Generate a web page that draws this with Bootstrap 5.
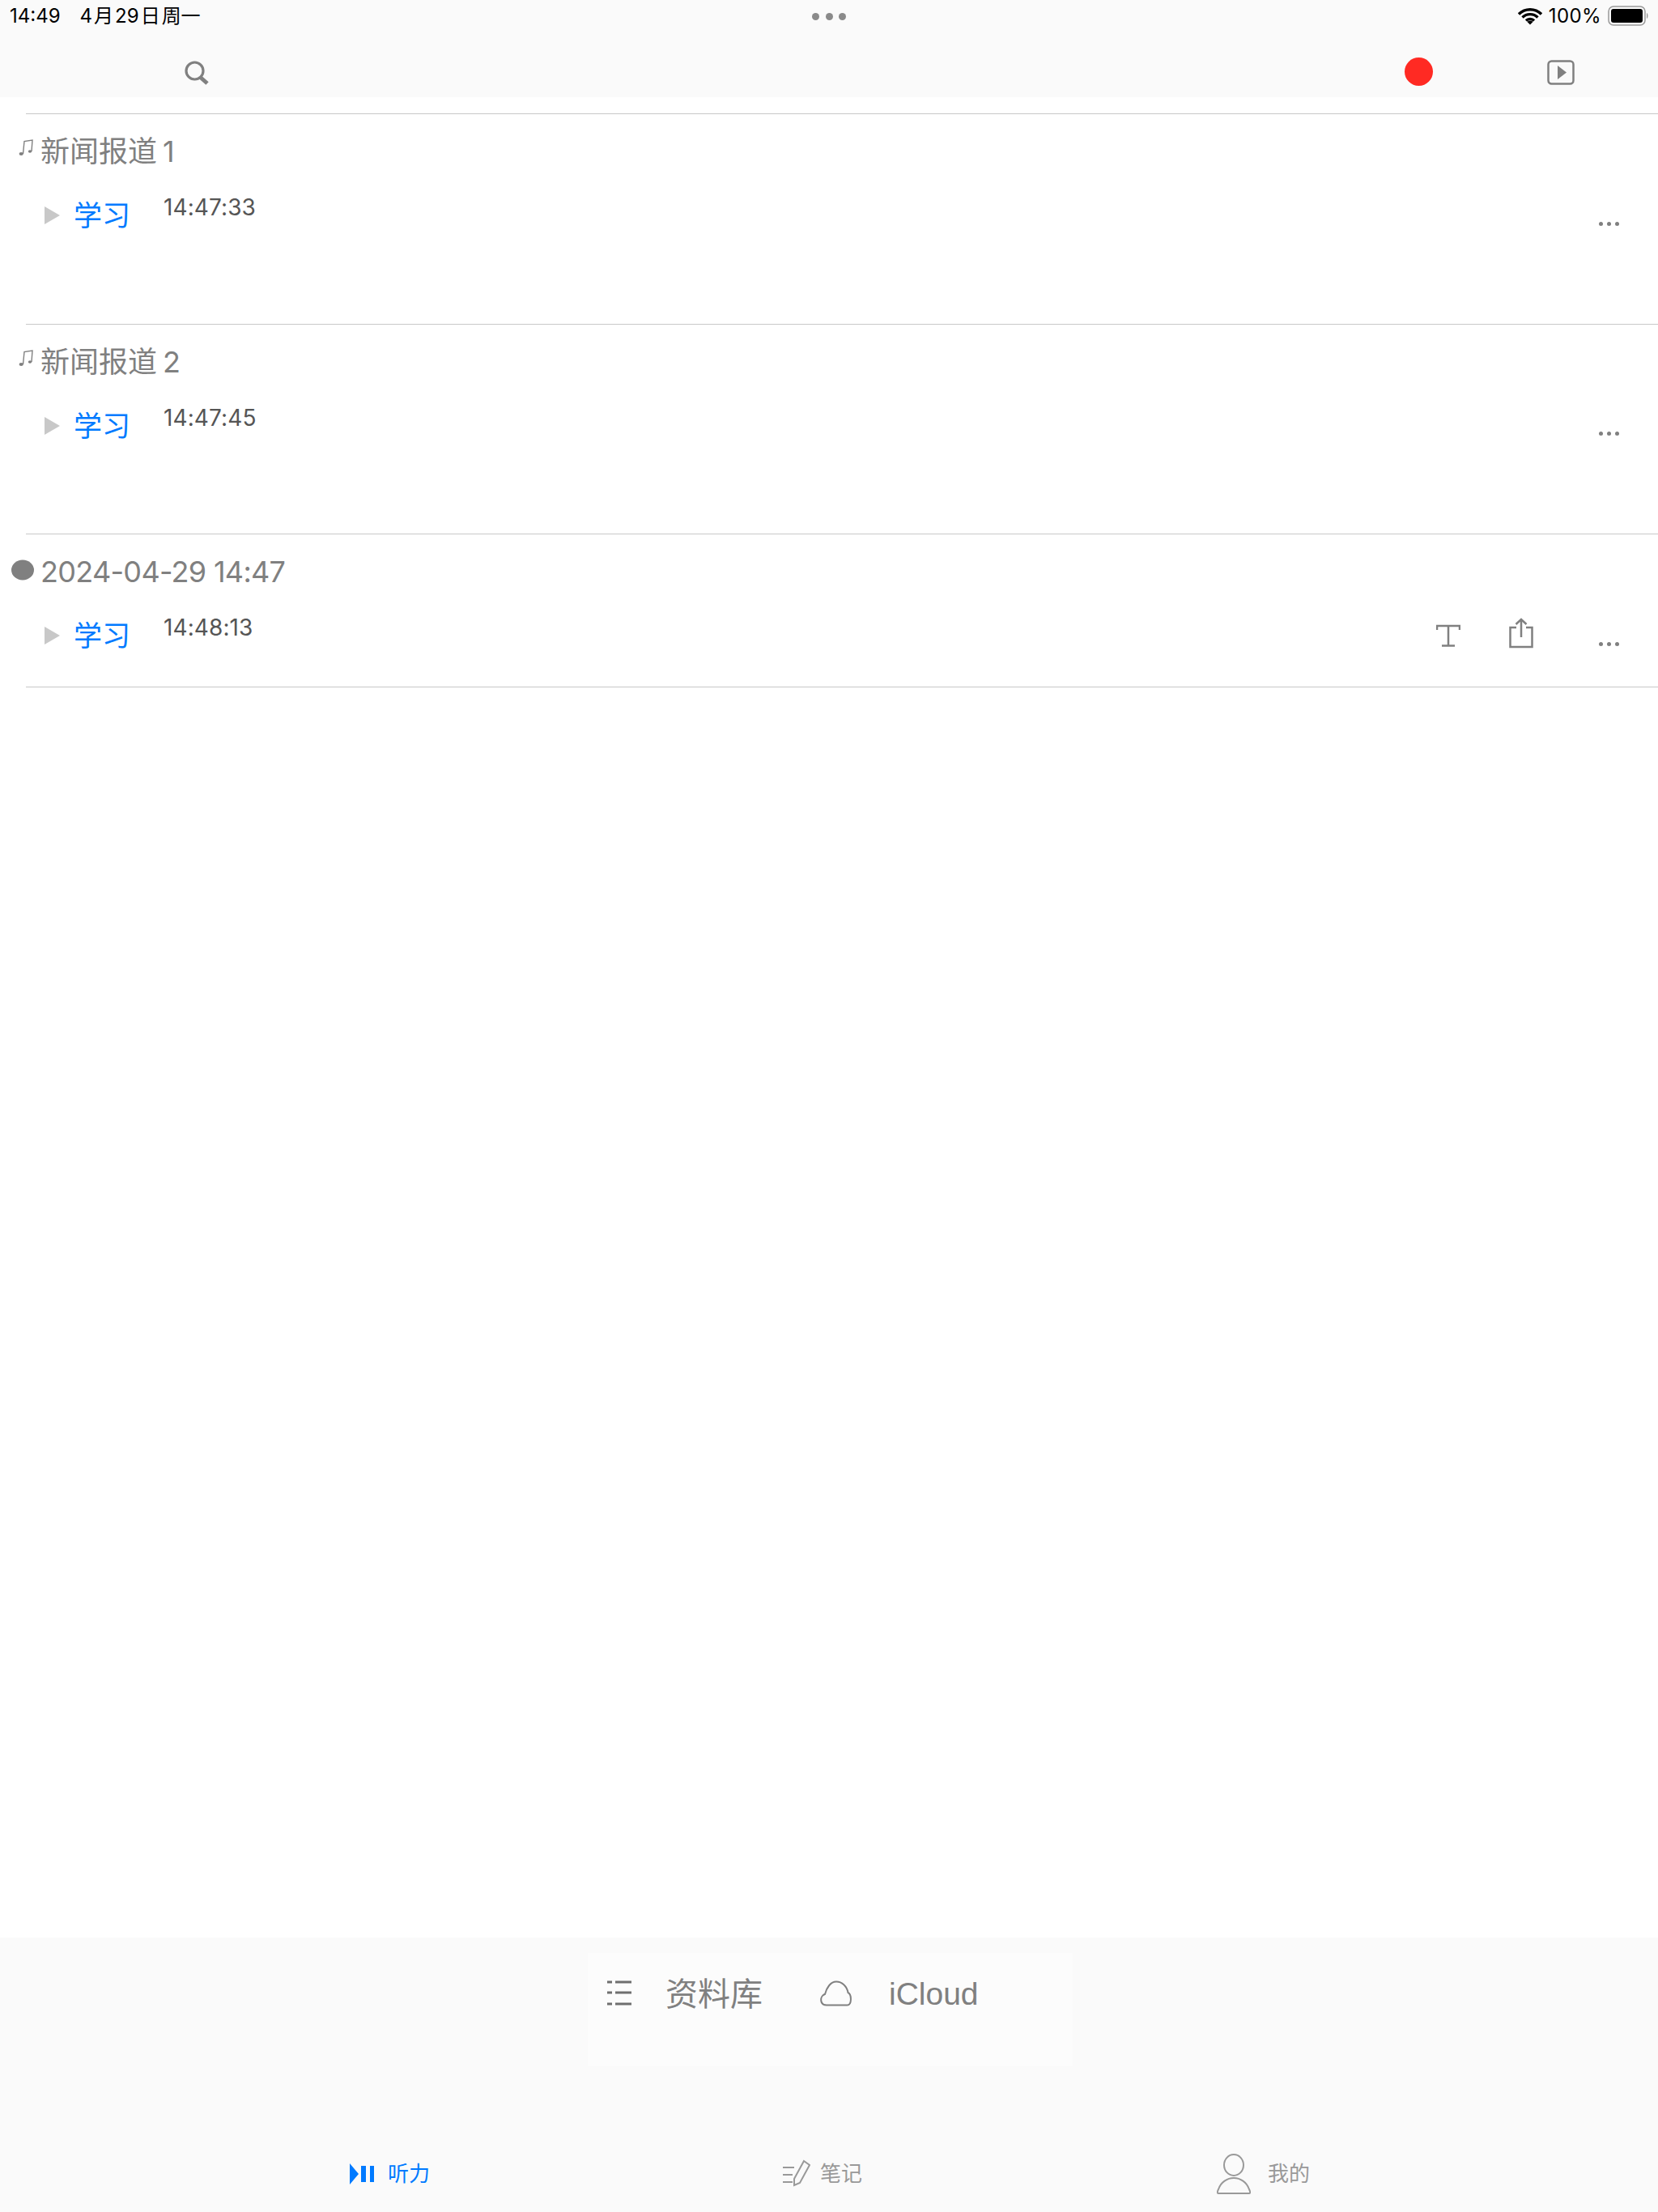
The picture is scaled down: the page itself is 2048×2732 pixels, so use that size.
<!doctype html>
<html lang="zh">
<head>
<meta charset="utf-8">
<link rel="stylesheet" href="https://cdn.jsdelivr.net/npm/bootstrap@5.3.0/dist/css/bootstrap.min.css">
<style>
body{background:#fff;font-family:"Inter","Noto Sans CJK SC",sans-serif;}
.app-page{height:2732px;}
.app-head{height:120px;background:#fafafa;}
.stat-row{height:40px;font-size:24px;line-height:40px;color:#000;padding:0 12px 0 12px;}
.stat-side{flex:1 1 0;}
.stat-date{margin-left:24px;}
.sp-n{margin:0 2px;}
.top-dots{width:42px;}
.top-dots i{width:9px;height:9px;border-radius:50%;background:#8a8a8a;display:block;}
.tool-row{height:80px;}
.ic-search{margin-left:228px;margin-top:20px;}
.rec-dot{width:35px;height:35px;border-radius:50%;background:#ff2a23;margin-left:1477px;margin-top:16px;}
.ic-play{margin-left:141px;margin-top:20px;}
.pct{letter-spacing:.4px;}
.list-area{padding-top:20px;flex:1 1 auto;}
.entry{border-top:1px solid #c8c8c8;margin-left:32px;height:259.5px;}
.entry-short{height:190px;border-bottom:1px solid #c8c8c8;}
.title-row{height:60px;margin-top:16px;margin-left:-32px;color:#808080;font-size:36px;line-height:60px;}
.title-ic{width:50px;flex:none;padding-left:23px;}
.title-ic-dot{padding-left:14px;}
.note-ic{display:block;margin-bottom:10px;}
.title-num{margin-left:7px;}
.title-date{letter-spacing:-.7px;}
.clip-row{height:68px;margin-top:15px;margin-left:23px;padding-right:48px;}
.tri{width:0;height:0;border-left:19px solid #c8c8c8;border-top:11px solid transparent;border-bottom:11px solid transparent;}
.clip-name{color:#007aff;font-size:35px;line-height:68px;margin-left:17px;width:111px;flex:none;}
.clip-time{color:#555;font-size:28px;line-height:36px;margin-bottom:20px;letter-spacing:.1px;}
.more-dots{gap:5px;margin-top:20px;margin-left:auto;}
.more-dots i{width:5px;height:5px;border-radius:50%;background:#808080;display:block;}
.acts{margin-left:auto;}
.ic-share{margin-left:60px;margin-top:-6px;}
.more-dots.after-acts{margin-left:81px;}
.lib-bar{background:#fafafa;height:339px;padding-top:19px;}
.lib-panel{width:599px;height:140px;background:#fcfcfc;margin-left:726px;padding:34px 0 0 24px;color:#808080;font-size:40px;line-height:34px;}
.lib-name{margin-left:42px;}
.ic-cloud{margin-left:71px;}
.cloud-name{margin-left:45px;font-family:"Liberation Sans",sans-serif;font-size:39px;}
.tab-row{padding:108px 0 0 432px;font-size:26px;line-height:50px;color:#999;}
.tab-on{color:#007aff;}
.tab-a{margin-left:17px;}
.tab-b{margin-left:436px;}
.tab-c{margin-left:438px;}
.tab-d{margin-left:21px;}
.tab-e{margin-left:12px;}
</style>
</head>
<body>
<div class="app-page d-flex flex-column">
  <header class="app-head">
    <div class="stat-row d-flex align-items-center">
      <div class="stat-side d-flex">
        <span>14:49</span><span class="stat-date">4<span class="sp-n">月</span>29<span class="sp-n">日</span>周一</span>
      </div>
      <div class="top-dots d-flex justify-content-between"><i></i><i></i><i></i></div>
      <div class="stat-side d-flex align-items-center justify-content-end">
        <svg width="30" height="22" viewBox="0 0 30 22" class="me-2"><path d="M1 8.500a20 20 0 0 1 28 0M5.500 12.500a13.500 13.500 0 0 1 19 0M10 16.500a7 7 0 0 1 10 0" fill="none" stroke="#000" stroke-width="3.400"/><path d="M15 21.500l-3.500-3.500a5 5 0 0 1 7 0z"/></svg>
        <span class="pct">100%</span>
        <svg width="50" height="26" viewBox="0 0 50 26" class="ms-2"><rect x="1" y="1" width="45" height="23" rx="6" fill="none" stroke="#999" stroke-width="1.500"/><rect x="4" y="4" width="39" height="17" rx="3"/><path d="M48 9c2 .5 2 6.500 0 7z" fill="#999"/></svg>
      </div>
    </div>
    <div class="tool-row d-flex align-items-center">
      <svg class="ic-search" width="30" height="30" viewBox="0 0 30 30"><circle cx="12.500" cy="12.500" r="10.500" fill="none" stroke="#808080" stroke-width="3.200"/><path d="M19 20l9 8" stroke="#808080" stroke-width="5"/></svg>
      <div class="rec-dot"></div>
      <svg class="ic-play" width="34" height="32" viewBox="0 0 34 32"><rect x="1.500" y="1.500" width="31" height="28" rx="4" fill="none" stroke="#808080" stroke-width="2.500"/><path d="M13 7l11 8.500-11 8.500z" fill="#808080"/></svg>
    </div>
  </header>
  <main class="list-area">
    <section class="entry">
      <div class="title-row d-flex align-items-center">
        <div class="title-ic"><svg class="note-ic" width="18" height="22" viewBox="0 0 18 22"><path d="M5.500 19L7 3.500 17 2l-1 14" fill="none" stroke="#808080" stroke-width="1.400"/><ellipse cx="3.200" cy="19" rx="2.600" ry="1.900" fill="#808080"/><ellipse cx="14" cy="16" rx="2.200" ry="1.700" fill="#808080"/></svg></div>
        <span>新闻报道<span class="title-num">1</span></span>
      </div>
      <div class="clip-row d-flex align-items-center">
        <div class="tri"></div><div class="clip-name">学习</div><div class="clip-time">14:47:33</div>
        <div class="more-dots d-flex"><i></i><i></i><i></i></div>
      </div>
    </section>
    <section class="entry">
      <div class="title-row d-flex align-items-center">
        <div class="title-ic"><svg class="note-ic" width="18" height="22" viewBox="0 0 18 22"><path d="M5.500 19L7 3.500 17 2l-1 14" fill="none" stroke="#808080" stroke-width="1.400"/><ellipse cx="3.200" cy="19" rx="2.600" ry="1.900" fill="#808080"/><ellipse cx="14" cy="16" rx="2.200" ry="1.700" fill="#808080"/></svg></div>
        <span>新闻报道<span class="title-num">2</span></span>
      </div>
      <div class="clip-row d-flex align-items-center">
        <div class="tri"></div><div class="clip-name">学习</div><div class="clip-time">14:47:45</div>
        <div class="more-dots d-flex"><i></i><i></i><i></i></div>
      </div>
    </section>
    <section class="entry entry-short">
      <div class="title-row d-flex align-items-center">
        <div class="title-ic title-ic-dot"><svg class="d-block mb-1" width="28" height="26" viewBox="0 0 28 26"><ellipse cx="14" cy="13" rx="14" ry="12.500" fill="#808080"/></svg></div>
        <span class="title-date">2024-04-29 14:47</span>
      </div>
      <div class="clip-row d-flex align-items-center">
        <div class="tri"></div><div class="clip-name">学习</div><div class="clip-time">14:48:13</div>
        <div class="acts d-flex align-items-center">
          <svg width="30" height="28" viewBox="0 0 30 28"><path d="M1 7V2h28v5M15 2v25M7 26.500h16" fill="none" stroke="#808080" stroke-width="2.500"/></svg>
          <svg class="ic-share" width="30" height="38" viewBox="0 0 30 38"><path d="M9 12H1.500v24h27V12H21M15 24V2M8.500 8L15 2l6.500 6" fill="none" stroke="#808080" stroke-width="2.500"/></svg>
        </div>
        <div class="more-dots after-acts d-flex"><i></i><i></i><i></i></div>
      </div>
    </section>
  </main>
  <footer class="lib-bar">
    <div class="lib-panel d-flex">
      <svg width="30" height="32" viewBox="0 0 30 32"><path d="M0 2h6M10 2h20M0 15h6M10 15h20M0 29h6M10 29h20" stroke="#6f6f6f" stroke-width="3"/></svg>
      <span class="lib-name">资料库</span>
      <svg class="ic-cloud" width="40" height="32" viewBox="0 0 40 32"><path d="M8 30.500C-1 30.500-.500 19 6 17 8 9 13 1.500 20 1.500S33 7 34.500 15c4.500 2 5 15.500-1 15.500z" fill="none" stroke="#808080" stroke-width="2"/></svg>
      <span class="cloud-name">iCloud</span>
    </div>
    <div class="tab-row d-flex">
      <div class="d-flex align-items-center tab-on">
        <svg width="30" height="26" viewBox="0 0 30 26"><path d="M0 0l11 13L0 26zM14 3h6v20h-6zM25 3h5v20h-5z" fill="#007aff"/></svg>
        <span class="tab-a">听力</span>
      </div>
      <div class="d-flex align-items-center tab-b">
        <svg width="34" height="36" viewBox="0 0 34 36"><path d="M0 10h14M0 19h12M0 28h12" stroke="#999" stroke-width="2"/><path d="M26 2l7 5-12 22-7 3 0-8z" fill="none" stroke="#999" stroke-width="2"/></svg>
        <span class="tab-e">笔记</span>
      </div>
      <div class="d-flex align-items-center tab-c">
        <svg width="42" height="50" viewBox="0 0 42 50"><ellipse cx="21" cy="14" rx="12" ry="13" fill="none" stroke="#999" stroke-width="2"/><path d="M2 49c-2 0-1-3 0-5 3-9 11-14 19-14s16 5 19 14c1 2 2 5 0 5z" fill="none" stroke="#999" stroke-width="2"/></svg>
        <span class="tab-d">我的</span>
      </div>
    </div>
  </footer>
</div>
</body>
</html>
